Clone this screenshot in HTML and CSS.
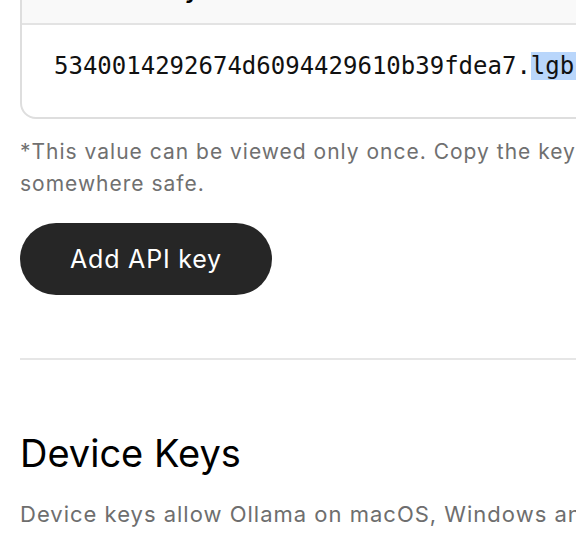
FILE: index.html
```html
<!DOCTYPE html>
<html lang="en">
<head>
    <meta charset="UTF-8">
    <meta name="viewport" content="width=device-width, initial-scale=1.0">
    <title>Settings - Keys</title>
    <link rel="stylesheet" href="styles.css">
</head>
<body>
    <div class="page">
        <section class="api-keys">
            <div class="key-card">
                <div class="key-card__head">New API key</div>
                <div class="key-card__body">
                    <code class="key-value">5340014292674d6094429610b39fdea7.<span class="key-value__sel">lgb-Qx7mT2vRk9</span></code>
                </div>
            </div>
            <p class="note">*This value can be viewed only once. Copy the key and store it somewhere safe.</p>
            <button class="btn-dark">Add API key</button>
        </section>

        <hr class="divider">

        <section class="device-keys">
            <h2>Device Keys</h2>
            <p class="muted">Device keys allow Ollama on macOS, Windows and Linux to sign in to your account.</p>
        </section>
    </div>
</body>
</html>
```

FILE: styles.css
```css
html, body {
    margin: 0;
    padding: 0;
    overflow: hidden;
}
body {
    font-family: Inter, "Noto Sans", Arial, sans-serif;
    color: #000;
    background: #fff;
}
.page {
    width: 760px;
    padding-left: 20px;
    /* page is scrolled a bit, the card header sits above the fold */
    margin-top: -36px;
}

.key-card {
    border: 2px solid #dedede;
    border-radius: 16px;
    overflow: hidden;
}
.key-card__head {
    background-color: #f9f9f9;
    border-bottom: 2px solid #e3e3e3;
    height: 59px;
    box-sizing: border-box;
    padding: 9px 32px 0;
    font-size: 24px;
    line-height: 30px;
    font-weight: 600;
}
.key-card__body {
    height: 92px;
    box-sizing: border-box;
    display: flex;
    align-items: center;
    padding: 0 32px 11px;
}
.key-value {
    font-family: "DejaVu Sans Mono", monospace;
    font-size: 24px;
    color: #111;
    white-space: nowrap;
}
.key-value__sel {
    background-color: #b9d6fb;
}

.note {
    margin: 17px 0 0;
    width: 740px;
    font-size: 21px;
    line-height: 32px;
    letter-spacing: 1px;
    color: #707070;
}
.btn-dark {
    margin-top: 23px;
    width: 252px;
    height: 72px;
    border: none;
    border-radius: 36px;
    background-color: #262626;
    color: #fff;
    font-family: inherit;
    font-size: 25px;
    letter-spacing: 0.8px;
    cursor: pointer;
}

.divider {
    border: none;
    border-top: 2px solid #e6e6e6;
    margin: 63px 0 0;
}

.device-keys h2 {
    margin: 70px 0 0;
    font-size: 38px;
    font-weight: 400;
    line-height: 46px;
}
.muted {
    margin: 23px 0 0;
    font-size: 22px;
    line-height: 30px;
    letter-spacing: 1px;
    color: #6e6e6e;
    white-space: nowrap;
}
```
